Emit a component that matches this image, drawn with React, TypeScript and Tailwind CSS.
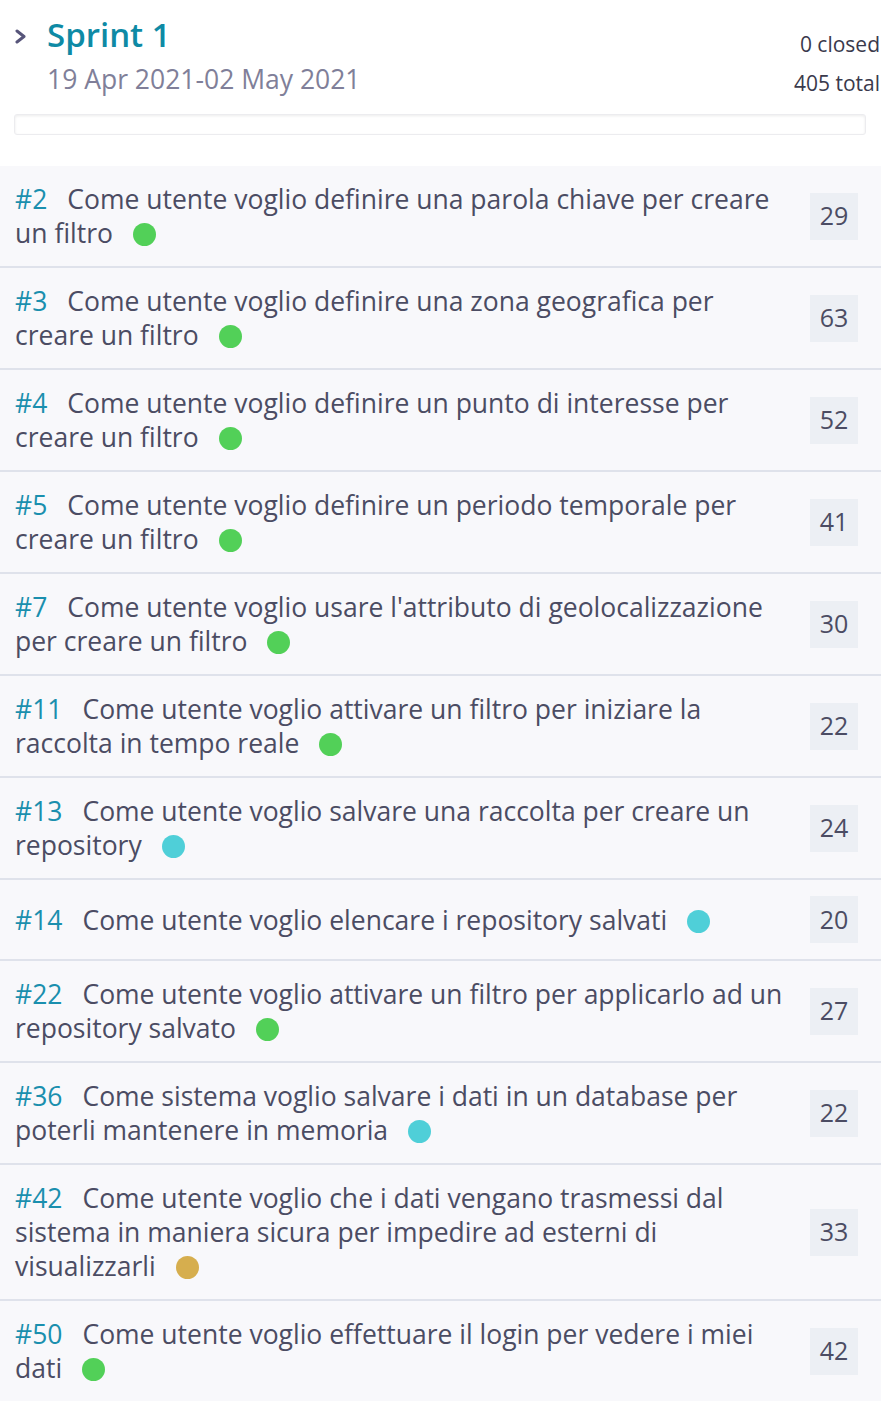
import React from 'react';

type Story = {
    ref: number;
    subject: string;
    points: number;
    status: 'green' | 'cyan' | 'gold';
};

const stories: Story[] = [
    { ref: 2, subject: 'Come utente voglio definire una parola chiave per creare un filtro', points: 29, status: 'green' },
    { ref: 3, subject: 'Come utente voglio definire una zona geografica per creare un filtro', points: 63, status: 'green' },
    { ref: 4, subject: 'Come utente voglio definire un punto di interesse per creare un filtro', points: 52, status: 'green' },
    { ref: 5, subject: 'Come utente voglio definire un periodo temporale per creare un filtro', points: 41, status: 'green' },
    { ref: 7, subject: "Come utente voglio usare l'attributo di geolocalizzazione per creare un filtro", points: 30, status: 'green' },
    { ref: 11, subject: 'Come utente voglio attivare un filtro per iniziare la raccolta in tempo reale', points: 22, status: 'green' },
    { ref: 13, subject: 'Come utente voglio salvare una raccolta per creare un repository', points: 24, status: 'cyan' },
    { ref: 14, subject: 'Come utente voglio elencare i repository salvati', points: 20, status: 'cyan' },
    { ref: 22, subject: 'Come utente voglio attivare un filtro per applicarlo ad un repository salvato', points: 27, status: 'green' },
    { ref: 36, subject: 'Come sistema voglio salvare i dati in un database per poterli mantenere in memoria', points: 22, status: 'cyan' },
    { ref: 42, subject: 'Come utente voglio che i dati vengano trasmessi dal sistema in maniera sicura per impedire ad esterni di visualizzarli', points: 33, status: 'gold' },
    { ref: 50, subject: 'Come utente voglio effettuare il login per vedere i miei dati', points: 42, status: 'green' },
];

const dotColor = {
    green: 'bg-[#52d058]',
    cyan: 'bg-[#4fcfd8]',
    gold: 'bg-[#d6ae4e]',
};

const StoryRow: React.FC<{ story: Story }> = ({ story }) => (
    <div className="flex items-center gap-[19px] pl-[15px] pr-[23px] py-4 bg-[#f8f8fb] border-b-2 border-[#dfe2eb] last:border-b-0">
        <p className="flex-1 text-[26.5px] leading-[34px] text-[#4b4c63]">
            <span className="text-[#1a8fae] mr-[20px]">#{story.ref}</span>
            {story.subject}
            <span className={`inline-block w-[23px] h-[23px] rounded-full ml-[20px] align-[-3px] ${dotColor[story.status]}`} />
        </p>
        <div className="w-[48px] h-[47px] flex items-center justify-center bg-[#eceff4] text-[25px] text-[#4b4c63]">
            {story.points}
        </div>
    </div>
);

export default function App() {
    return (
        <div className="w-[887px] min-h-[1407px] bg-white font-['Open_Sans',sans-serif]">
            <header className="flex justify-between pl-[14px] pr-[7px]">
                <div className="flex items-start">
                    <svg className="mt-[29px] w-[14px] h-[15px]" viewBox="0 0 14 15" fill="none">
                        <path d="M3 2 L10 7.5 L3 13" stroke="#57557a" strokeWidth="3" strokeLinecap="round" strokeLinejoin="round" />
                    </svg>
                    <div className="ml-[19px] pt-[15px]">
                        <div className="text-[33px] leading-[40px] font-semibold text-[#0e8aa5]">Sprint 1</div>
                        <div className="mt-[7px] text-[26.5px] leading-[34px] text-[#807f99]">19 Apr 2021-02 May 2021</div>
                    </div>
                </div>
                <div className="pt-[30px] text-right text-[21px] leading-[28px] text-[#3a3a4c]">
                    <div>0 closed</div>
                    <div className="mt-[11px]">405 total</div>
                </div>
            </header>
            <div className="ml-[14px] mt-[17px] w-[852px] h-[21px] rounded-[3px] bg-white border border-[#ececef] shadow-[inset_0_1px_3px_rgba(0,0,0,0.08)]" />
            <div className="mt-[31px] w-[881px]">
                {stories.map((s) => (
                    <StoryRow key={s.ref} story={s} />
                ))}
            </div>
        </div>
    );
}
